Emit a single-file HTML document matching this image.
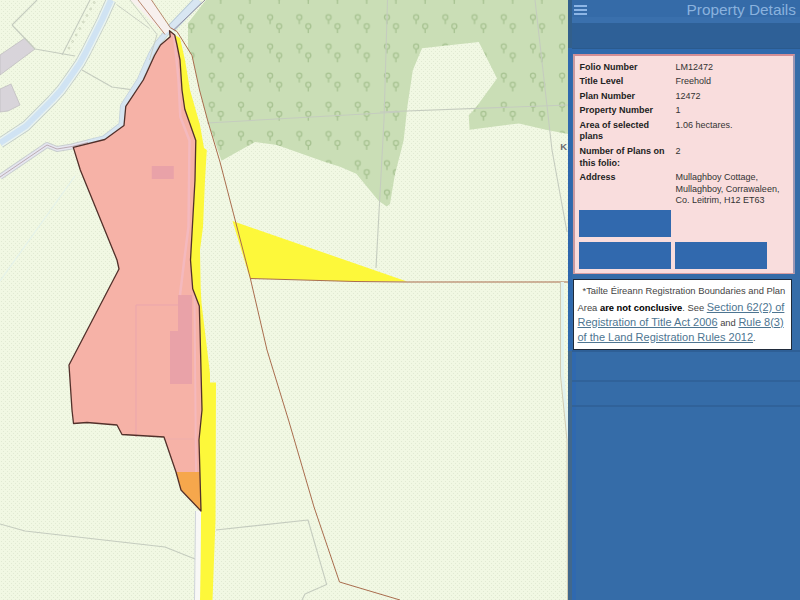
<!DOCTYPE html>
<html><head><meta charset="utf-8"><style>
*{margin:0;padding:0;box-sizing:border-box}
html,body{width:800px;height:600px;overflow:hidden;background:#356ca8;font-family:"Liberation Sans",sans-serif}
#map{position:absolute;left:0;top:0;width:568px;height:600px;overflow:hidden}
#sb{position:absolute;left:568px;top:0;width:232px;height:600px;background:#356ca8}
#sbedge{position:absolute;left:0;top:0;width:4px;height:600px;background:#2f68ad}
.se{position:absolute;left:0;width:4px}
#hdr{position:absolute;left:4px;top:0;width:228px;height:22.5px;background:linear-gradient(#356ba8 0,#356ba8 17px,#3a70ad 17px)}
.hb{position:absolute;left:2px;width:13px;height:2px;background:#8db6e6}
#title{position:absolute;right:4px;top:1px;font-size:15.4px;color:#8ab2de;white-space:nowrap}
#band{position:absolute;left:4px;top:22.5px;width:228px;height:26.5px;background:linear-gradient(#2e6097 0,#2e6097 25.5px,#2a5a8e 25.5px)}
#band2{position:absolute;left:4px;top:49px;width:228px;height:5px;background:#306aad}
#panel{position:absolute;left:4.5px;top:53.5px;width:222px;height:220px;background:#f9dddd;border:1.5px solid #d9a0a3;border-top:2.5px solid #d38e95;border-left:2.5px solid #cb9aa0;border-right:2.5px solid #9a96b4}
table{position:absolute;left:5px;top:6px;border-collapse:collapse}
td{vertical-align:top;font-size:9px;line-height:11.6px;padding:0 0 3px 0}
td.l{font-weight:bold;color:#222;width:96px}
td.v{color:#333}
.btn{position:absolute;width:92px;height:27px;background:#3169ae}
#disc{position:absolute;left:4.5px;top:279px;width:219.5px;height:70.5px;background:#fff;border:1.2px solid #1f2a3a}
.dl{position:absolute;white-space:nowrap;font-size:9.4px;color:#444;line-height:12px}
.dl b{color:#000}
.dl a{font-size:11px;color:#4d7591;text-decoration:underline}
.ln{position:absolute;left:4px;width:228px;height:1.5px}
</style></head>
<body>
<div id="map">
<svg width="568" height="600" viewBox="0 0 568 600" style="position:absolute;left:0;top:0;display:block">
<defs>
<pattern id="dots" width="4" height="4" patternUnits="userSpaceOnUse"><rect width="4" height="4" fill="#f1f8e3"/><rect x="1" y="1" width="1" height="1" fill="#e1ead3"/><rect x="3" y="3" width="1" height="1" fill="#e1ead3"/></pattern>
<pattern id="trees" width="29.2" height="29.2" patternUnits="userSpaceOnUse" x="0.5" y="0">
<rect width="29.2" height="29.2" fill="#cadeb6"/>
<g fill="none" stroke="#a8c392" stroke-width="1.3"><circle cx="6.85" cy="17.3" r="2.5"/><path d="M6.85 19.8V24"/><circle cx="15.85" cy="26.3" r="2.5"/><circle cx="15.85" cy="-2.9" r="2.5"/><path d="M15.85 28.8V33M15.85 -0.4V3.8"/></g>
</pattern>
</defs>
<rect width="568" height="600" fill="url(#dots)"/>
<polygon points="206,0 568,0 568,134 547,130 519,123.4 469.6,129.8 468.7,115.2 475,108.8 497,78.5 478.8,42 422,48.3 412.8,70.3 407.3,107 403.7,140 400.7,152 394.8,175 390,204 386.7,206.5 378.5,200.7 356.3,173.8 340,166.8 325,162 277,145 255,142 221.5,160.7 207.5,120 199.5,90 192,55.5 188,50 188,23" fill="url(#trees)"/>

<polyline points="111,0 102,20 86,52 80,63 71,76 61,90 52,100 26,126 0,143" fill="none" stroke="#c4cec8" stroke-width="10.5" stroke-linejoin="round" />
<polyline points="111,0 102,20 86,52 80,63 71,76 61,90 52,100 26,126 0,143" fill="none" stroke="#e9f3f0" stroke-width="8.8" stroke-linejoin="round" />
<polyline points="111,0 102,20 86,52 80,63 71,76 61,90 52,100 26,126 0,143" fill="none" stroke="#d0e3f3" stroke-width="6" stroke-linejoin="round" />
<polygon points="0,55 25,38 35,49 0,75" fill="#d8d4da" stroke="#c0bec0" stroke-width="0.8"/>
<polygon points="0,89 11,84 20,105 8,111 0,112" fill="#d8d4da" stroke="#c0bec0" stroke-width="0.8"/>
<polyline points="12,25 37,0" fill="none" stroke="#c5ccbf" stroke-width="1.1" stroke-linejoin="round" />
<polyline points="12,25 35,49 75,56" fill="none" stroke="#c5ccbf" stroke-width="1.1" stroke-linejoin="round" />
<polyline points="82,70 112,87 131,89.6" fill="none" stroke="#c5ccbf" stroke-width="1.1" stroke-linejoin="round" />
<polyline points="207,123 400,112" fill="none" stroke="#c5ccbf" stroke-width="1.1" stroke-linejoin="round" />
<polyline points="387.5,0 384,120 376,268" fill="none" stroke="#c5ccbf" stroke-width="1.1" stroke-linejoin="round" />
<polyline points="380,112 568,105" fill="none" stroke="#c5ccbf" stroke-width="1.1" stroke-linejoin="round" />
<polyline points="535,0 552,150 567,232" fill="none" stroke="#c5ccbf" stroke-width="1.1" stroke-linejoin="round" />
<polyline points="0,524 25,531 165,547 195,559" fill="none" stroke="#c5ccbf" stroke-width="1.1" stroke-linejoin="round" />
<polyline points="216,530 308,520 326.6,584.4 305,594 302,600" fill="none" stroke="#c5ccbf" stroke-width="1.1" stroke-linejoin="round" />
<polyline points="62,55 90,0" fill="none" stroke="#c5ccbf" stroke-width="1.1" stroke-linejoin="round" />
<circle cx="69.0" cy="48.0" r="0.9" fill="none" stroke="#c0c8b0" stroke-width="0.7"/>
<circle cx="72.6" cy="41.5" r="0.9" fill="none" stroke="#c0c8b0" stroke-width="0.7"/>
<circle cx="76.2" cy="35.0" r="0.9" fill="none" stroke="#c0c8b0" stroke-width="0.7"/>
<circle cx="79.8" cy="28.5" r="0.9" fill="none" stroke="#c0c8b0" stroke-width="0.7"/>
<circle cx="83.4" cy="22.0" r="0.9" fill="none" stroke="#c0c8b0" stroke-width="0.7"/>
<circle cx="87.0" cy="15.5" r="0.9" fill="none" stroke="#c0c8b0" stroke-width="0.7"/>
<circle cx="90.6" cy="9.0" r="0.9" fill="none" stroke="#c0c8b0" stroke-width="0.7"/>
<circle cx="94.2" cy="2.5" r="0.9" fill="none" stroke="#c0c8b0" stroke-width="0.7"/>
<polyline points="0,177 47,145 57,149 72,146.5 90,142" fill="none" stroke="#c9cfcf" stroke-width="6" stroke-linejoin="round" />
<polyline points="0,177 47,145 57,149 72,146.5 90,142" fill="none" stroke="#e6e6f0" stroke-width="4" stroke-linejoin="round" />
<polyline points="0,177 47,145 57,149 72,146.5 90,142" fill="none" stroke="#a89098" stroke-width="0.7" stroke-linejoin="round" />
<polyline points="88,142.5 104,138.5 121.5,125 123,106 140,79.5 143.5,71.5 151,54.5 157,44 168,31" fill="none" stroke="#c4d2da" stroke-width="6" stroke-linejoin="round" />
<polyline points="88,142.5 104,138.5 121.5,125 123,106 140,79.5 143.5,71.5 151,54.5 157,44 168,31" fill="none" stroke="#d6e5f1" stroke-width="4.5" stroke-linejoin="round" />
<polyline points="75,176 40,225 0,281" fill="none" stroke="#e4f2ea" stroke-width="1.2" stroke-linejoin="round" />
<polyline points="198.5,0 171,28.5" fill="none" stroke="#b6c9d6" stroke-width="9" stroke-linejoin="round" />
<polyline points="198.5,0 171,28.5" fill="none" stroke="#d8e6f2" stroke-width="7" stroke-linejoin="round" />
<polyline points="205,0 174,29.5" fill="none" stroke="#8a8498" stroke-width="0.9" stroke-linejoin="round" />
<polygon points="130.5,0 151.5,0 171,30 165,34" fill="#f7f0ee"/>
<polyline points="138,0 165,34.5" fill="none" stroke="#a96d4e" stroke-width="0.8" stroke-linejoin="round" />
<polyline points="151.5,0 171,28.5" fill="none" stroke="#a96d4e" stroke-width="0.8" stroke-linejoin="round" />
<polyline points="130,0 157,34.5 149.5,60" fill="none" stroke="#c5ccbf" stroke-width="0.9" stroke-linejoin="round" />
<polyline points="116.5,4.5 149.5,28.5" fill="none" stroke="#c5ccbf" stroke-width="0.9" stroke-linejoin="round" />
<polygon points="169.5,30.7 174.7,35 177,45 180,60 182,90 184.8,109.3 195.8,140.5 195,180 190.5,260 192.7,288.7 199.3,306 200,330 202,410 199,440 201,511 181,490 176,472 164,437 122,434.5 117,425 87,422.5 73.5,423.5 72,410 69,365 119,269 117,260 80.3,170 73.3,147.4 104.8,139.5 124,125.5 125.8,106.3 143.3,80 147,72 154.5,55.5 160.5,45 170.2,36.7" fill="#f6b2a7"/>
<polygon points="176,472 200,472 201,511 181,490" fill="#f6a74c"/>
<rect x="151.8" y="166" width="22" height="13" fill="#e9a2a8"/>
<rect x="170" y="331" width="22" height="53" fill="#e9a2a8"/>
<rect x="178" y="295" width="14" height="36" fill="#e9a2a8"/>
<polyline points="136,437 136,305 178,305" fill="none" stroke="#eaa5ad" stroke-width="1" stroke-linejoin="round" />
<polyline points="174,35 178.5,80 180.3,116.7 189.5,140.5 188.5,226.7 184,262 180,295" fill="none" stroke="#f4b9be" stroke-width="2.5" stroke-linejoin="round" />
<polyline points="194.5,295 196,472" fill="none" stroke="#f4b9be" stroke-width="2" stroke-linejoin="round" />
<polyline points="164,439 194,439" fill="none" stroke="#eeadad" stroke-width="0.8" stroke-linejoin="round" />
<polygon points="174.7,35 177,45 180,60 182,90 184.8,109.3 195.8,140.5 195,180 190.5,260 192.7,288.7 199.3,306 200,330 202,410 199,440 201,511 200,600 212.5,600 215.5,520 216,382.5 210,382.5 210,373.5 201.5,303 200.7,288 200,250 203,227 205,180 206.8,150 204,148 200,125 190,90 185,60 180,38" fill="#fdf83a"/>
<polygon points="232.5,221 407,281.5 355,281.5 250,278.5" fill="#fdf83a"/>
<polygon points="196,511 201,511 200,600 195,600" fill="#f8f8f6"/>
<polyline points="195.5,511 194.5,600" fill="none" stroke="#c6cad8" stroke-width="0.8" stroke-linejoin="round" />
<polyline points="171,28 177,31.5 192,55.5 199.5,90 207.5,120 220,162 250,277 267,350 288.5,420 314,507 339.5,582 400,600" fill="none" stroke="#a96d4e" stroke-width="1" stroke-linejoin="round" />
<polyline points="250,278.5 355,281.5 407,282 568,282" fill="none" stroke="#a96d4e" stroke-width="1" stroke-linejoin="round" />
<polyline points="562.5,282 562.5,376 569,440 569.5,600" fill="none" stroke="#e2f2ee" stroke-width="3" stroke-linejoin="round" />
<polyline points="560.5,282 560.5,376 567,440 567.5,600" fill="none" stroke="#cdc6ae" stroke-width="0.9" stroke-linejoin="round" />
<polygon points="169.5,30.7 174.7,35 177,45 180,60 182,90 184.8,109.3 195.8,140.5 195,180 190.5,260 192.7,288.7 199.3,306 200,330 202,410 199,440 201,511 181,490 176,472 164,437 122,434.5 117,425 87,422.5 73.5,423.5 72,410 69,365 119,269 117,260 80.3,170 73.3,147.4 104.8,139.5 124,125.5 125.8,106.3 143.3,80 147,72 154.5,55.5 160.5,45 170.2,36.7" fill="none" stroke="#52302a" stroke-width="1.3" stroke-linejoin="round"/>
<text x="560.3" y="150.3" font-family="Liberation Sans" font-weight="bold" font-size="9.5" fill="#6c6a70">K</text>
</svg>
</div>

<div id="sb">
 <div id="sbedge"></div><div class="se" style="top:0;height:48px;background:#325f8b"></div><div class="se" style="top:351px;height:249px;background:#41688c"></div><div style="position:absolute;left:4px;top:351px;width:4px;height:249px;background:#2f69b0"></div>
 <div id="hdr">
  <div class="hb" style="top:4.5px"></div><div class="hb" style="top:8.5px"></div><div class="hb" style="top:12.5px"></div>
  <div id="title">Property Details</div>
 </div>
 <div id="band"></div><div id="band2"></div>
 <div id="panel">
  <table>
   <tr><td class="l">Folio Number</td><td class="v">LM12472</td></tr>
   <tr><td class="l">Title Level</td><td class="v">Freehold</td></tr>
   <tr><td class="l">Plan Number</td><td class="v">12472</td></tr>
   <tr><td class="l">Property Number</td><td class="v">1</td></tr>
   <tr><td class="l">Area of selected<br>plans</td><td class="v">1.06 hectares.</td></tr>
   <tr><td class="l">Number of Plans on<br>this folio:</td><td class="v">2</td></tr>
   <tr><td class="l">Address</td><td class="v">Mullaghboy Cottage,<br>Mullaghboy, Corrawaleen,<br>Co. Leitrim, H12 ET63</td></tr>
  </table>
  <div class="btn" style="left:4.5px;top:154.5px"></div>
  <div class="btn" style="left:4.5px;top:186px"></div>
  <div class="btn" style="left:100.5px;top:186px"></div>
 </div>
 <div id="disc">
  <div class="dl" style="top:5px;left:9px">*Tailte Éireann Registration Boundaries and Plan</div>
  <div class="dl" style="top:20.5px;left:4px">Area <b>are not conclusive</b>. See <a>Section 62(2) of</a></div>
  <div class="dl" style="top:35.5px;left:4px"><a>Registration of Title Act 2006</a> and <a>Rule 8(3)</a></div>
  <div class="dl" style="top:51px;left:4px"><a>of the Land Registration Rules 2012</a>.</div>
 </div>
 <div class="ln" style="top:350px;background:#2e5f96"></div>
 <div class="ln" style="top:380px;background:#30629a"></div>
 <div class="ln" style="top:405px;background:#30629a"></div>
</div>

</body></html>
